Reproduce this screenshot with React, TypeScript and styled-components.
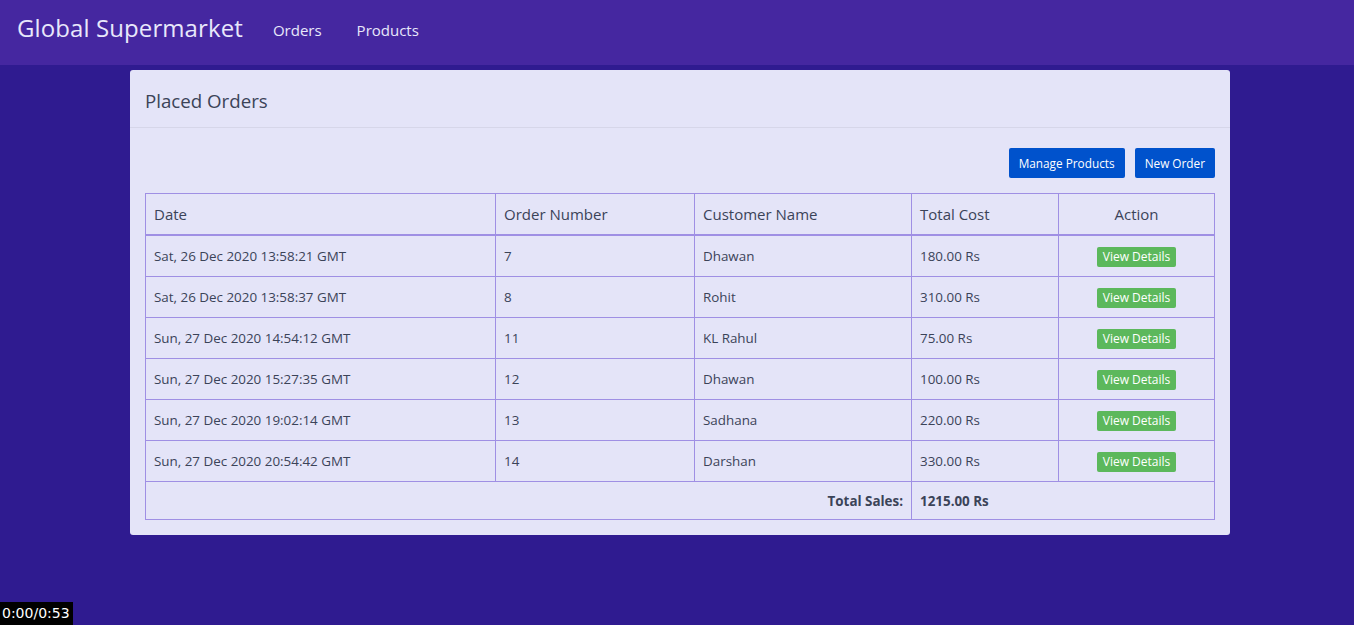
import React from "react";
import styled, { createGlobalStyle } from "styled-components";

const Global = createGlobalStyle`
  html, body { margin: 0; padding: 0; }
  body {
    background: #2f1b90;
    font-family: "Open Sans", "Noto Sans", sans-serif;
    color: #39405a;
    min-height: 625px;
  }
`;

const Nav = styled.nav`
  height: 65px;
  background: #4527a0;
  display: flex;
  align-items: center;
  padding: 0 17px;
  box-sizing: border-box;
`;

const Brand = styled.div`
  font-size: 24px;
  color: #e8e8fb;
  margin-right: 30px;
  margin-top: -10px;
  letter-spacing: 0.1px;
`;

const NavLink = styled.a`
  font-size: 15px;
  color: #e8e8fb;
  margin-right: 35px;
  margin-top: -6px;
`;

const Card = styled.section`
  width: 1100px;
  margin: 5px 0 0 130px;
  background: #e4e4f8;
  border-radius: 3px;
  box-sizing: border-box;
`;

const CardHeader = styled.div`
  height: 58px;
  border-bottom: 1px solid #d6d6e9;
  display: flex;
  align-items: center;
  padding: 4px 15px 0;
  font-size: 18.7px;
  color: #3b4358;
  box-sizing: border-box;
`;

const CardBody = styled.div`
  padding: 20px 15px 15px;
`;

const Toolbar = styled.div`
  display: flex;
  justify-content: flex-end;
  gap: 10px;
  margin-bottom: 15px;
`;

const Button = styled.button`
  height: 30px;
  padding: 0 10px;
  background: #0052cc;
  color: #fff;
  border: none;
  border-radius: 2px;
  font-family: inherit;
  font-size: 11.8px;
`;

const Table = styled.table`
  width: 100%;
  border-collapse: collapse;
  font-size: 13.4px;
  table-layout: fixed;
`;

const Th = styled.th<{ $center?: boolean }>`
  height: 40px;
  border: 1px solid #9f8fe4;
  border-bottom: 2px solid #9f8fe4;
  font-weight: 400;
  font-size: 15px;
  text-align: ${(p) => (p.$center ? "center" : "left")};
  padding: 0 8px;
  color: #3b4358;
`;

const Td = styled.td<{ $center?: boolean; $right?: boolean; $bold?: boolean }>`
  height: 40px;
  border: 1px solid #9f8fe4;
  padding: 0 8px;
  text-align: ${(p) => (p.$center ? "center" : p.$right ? "right" : "left")};
  font-weight: ${(p) => (p.$bold ? 700 : 400)};
  color: #3b4358;
`;

const FootTd = styled(Td)`
  height: 37px;
`;

const ViewBtn = styled.button`
  height: 20px;
  padding: 0 6px;
  background: #5cb85c;
  color: #fff;
  border: none;
  border-radius: 2px;
  font-family: inherit;
  font-size: 12px;
  vertical-align: middle;
  margin-top: 1px;
`;

const Timer = styled.div`
  position: fixed;
  left: 0;
  bottom: 0;
  background: #000;
  color: #fff;
  font-family: "DejaVu Sans", sans-serif;
  font-size: 14px;
  padding: 2px 3px 2px 2px;
  height: 19px;
  line-height: 19px;
`;

const orders = [
  ["Sat, 26 Dec 2020 13:58:21 GMT", "7", "Dhawan", "180.00 Rs"],
  ["Sat, 26 Dec 2020 13:58:37 GMT", "8", "Rohit", "310.00 Rs"],
  ["Sun, 27 Dec 2020 14:54:12 GMT", "11", "KL Rahul", "75.00 Rs"],
  ["Sun, 27 Dec 2020 15:27:35 GMT", "12", "Dhawan", "100.00 Rs"],
  ["Sun, 27 Dec 2020 19:02:14 GMT", "13", "Sadhana", "220.00 Rs"],
  ["Sun, 27 Dec 2020 20:54:42 GMT", "14", "Darshan", "330.00 Rs"],
];

export default function App() {
  return (
    <>
      <Global />
      <Nav>
        <Brand>Global Supermarket</Brand>
        <NavLink>Orders</NavLink>
        <NavLink>Products</NavLink>
      </Nav>
      <Card>
        <CardHeader>Placed Orders</CardHeader>
        <CardBody>
          <Toolbar>
            <Button>Manage Products</Button>
            <Button>New Order</Button>
          </Toolbar>
          <Table>
            <colgroup>
              <col style={{ width: 350 }} />
              <col style={{ width: 199 }} />
              <col style={{ width: 217 }} />
              <col style={{ width: 147 }} />
              <col />
            </colgroup>
            <thead>
              <tr>
                <Th>Date</Th>
                <Th>Order Number</Th>
                <Th>Customer Name</Th>
                <Th>Total Cost</Th>
                <Th $center>Action</Th>
              </tr>
            </thead>
            <tbody>
              {orders.map((o) => (
                <tr key={o[1]}>
                  <Td>{o[0]}</Td>
                  <Td>{o[1]}</Td>
                  <Td>{o[2]}</Td>
                  <Td>{o[3]}</Td>
                  <Td $center>
                    <ViewBtn>View Details</ViewBtn>
                  </Td>
                </tr>
              ))}
              <tr>
                <FootTd colSpan={3} $right $bold>
                  Total Sales:
                </FootTd>
                <FootTd colSpan={2} $bold>
                  1215.00 Rs
                </FootTd>
              </tr>
            </tbody>
          </Table>
        </CardBody>
      </Card>
      <Timer>0:00/0:53</Timer>
    </>
  );
}
